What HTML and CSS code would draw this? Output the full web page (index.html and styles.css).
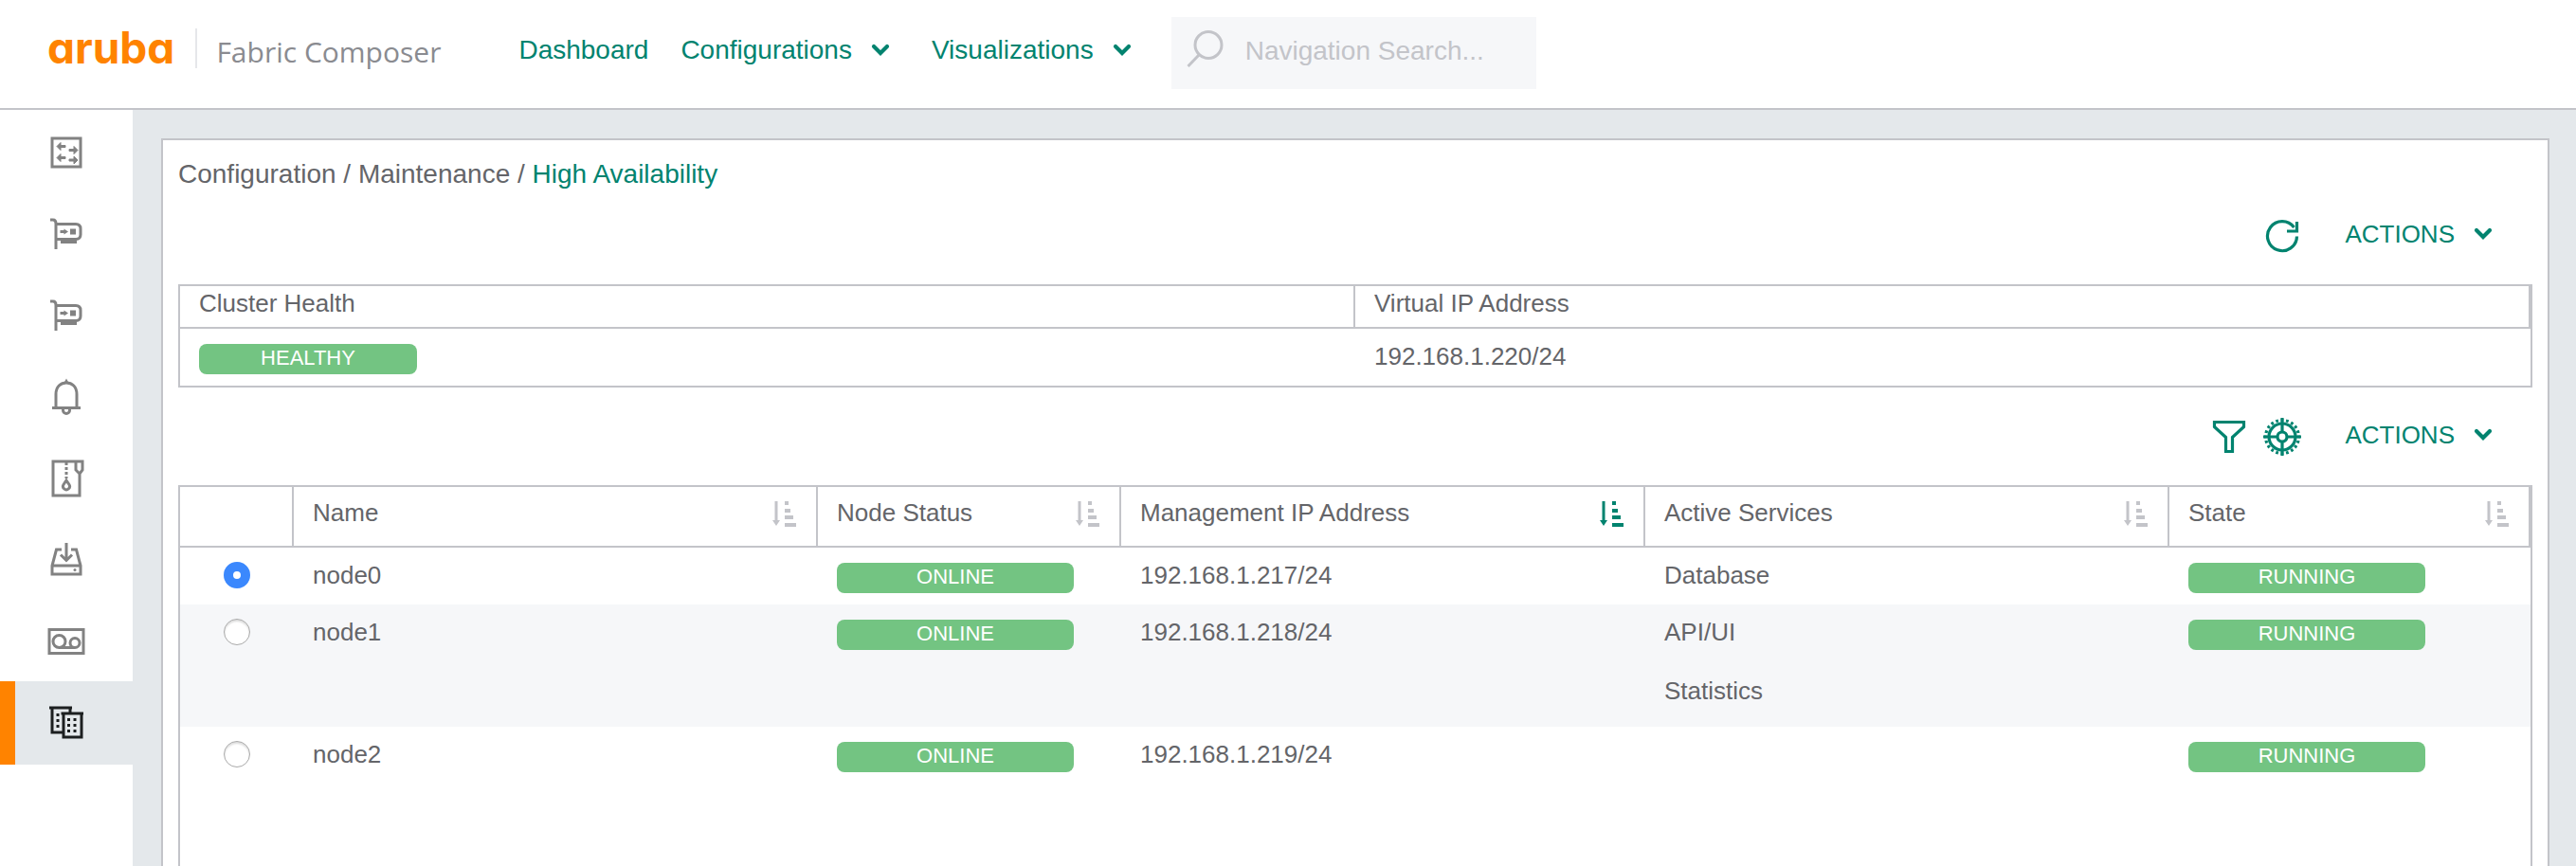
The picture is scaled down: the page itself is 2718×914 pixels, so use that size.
FILE: index.html
```html
<!DOCTYPE html>
<html lang="en">
<head>
<meta charset="utf-8">
<title>Aruba Fabric Composer - High Availability</title>
<link rel="stylesheet" href="styles.css">
</head>
<body>
<svg class="defs" aria-hidden="true">
  <symbol id="chevron" viewBox="0 0 20 14"><path d="M3 3l7 7 7-7" fill="none" stroke="currentColor" stroke-width="4.200" stroke-linecap="round"/></symbol>
  <symbol id="sort" viewBox="0 0 26 28"><path d="M2.500 1h3v20h2.500l-4 6L0 21h2.500z M13 1h4v4h-4z M13 9h6v4h-6z M13 16h9v4H13z M13 24h12v4H13z" fill="currentColor"/></symbol>
  <symbol id="nic" viewBox="0 0 36 36"><g fill="none" stroke="currentColor" stroke-width="3"><path d="M1 3h3q3 0 3 4v27"/><path d="M7 7.500h21q5 0 5 5v6q0 5-5 5H7"/></g><path d="M12 24h17v4H12z M11.500 14h4v-1.500l4.500 3-4.500 3V17h-4z M22 12.500h6v6h-6z" fill="currentColor"/></symbol>
</svg>
<header class="topbar">
  <a class="brand" href="#"><span class="brand-mark">aruba</span><span class="brand-name">Fabric Composer</span></a>
  <nav class="menu">
    <a class="menu-link" href="#">Dashboard</a>
    <button class="menu-link" type="button">Configurations<svg class="chevron"><use href="#chevron"/></svg></button>
    <button class="menu-link" type="button">Visualizations<svg class="chevron"><use href="#chevron"/></svg></button>
  </nav>
  <label class="search">
    <svg class="search-icon" viewBox="0 0 40 40"><g fill="none" stroke="currentColor" stroke-width="3"><circle cx="23" cy="15.500" r="14"/><path d="M13 26L1.500 38"/></g></svg>
    <input class="search-input" type="text" placeholder="Navigation Search..." aria-label="Navigation Search">
  </label>
</header>
<div class="body">
  <nav class="sidebar">
    <a class="side-item" href="#" aria-label="Switches"><svg class="side-icon" viewBox="0 0 40 40"><path d="M5 5h30v30H5z" fill="none" stroke="currentColor" stroke-width="3"/><path d="M10 13.500l4-4v3h5v2h-5v3z M10 25.500l4-4v3h5v2h-5v3z M32 17.500l-4-4v3h-5v2h5v3z M32 28l-4-4v3h-5v2h5v3z" fill="currentColor" stroke="currentColor"/></svg></a>
    <a class="side-item" href="#" aria-label="Adapters"><svg class="side-icon" viewBox="-2 -2 40 40"><use href="#nic" width="36" height="36"/></svg></a>
    <a class="side-item" href="#" aria-label="Ports"><svg class="side-icon" viewBox="-2 -2 40 40"><use href="#nic" width="36" height="36"/></svg></a>
    <a class="side-item" href="#" aria-label="Alarms"><svg class="side-icon" viewBox="0 0 40 40"><g fill="none" stroke="currentColor" stroke-width="3"><path d="M5 31.500h30"/><path d="M9 32V17c0-8 5-12 11-12s11 4 11 12v15"/><path d="M16.500 33v1a3.500 3.500 0 0 0 7 0v-1"/></g><path d="M17.500 5L20 .500 22.500 5z" fill="currentColor"/></svg></a>
    <a class="side-item" href="#" aria-label="Archive"><svg class="side-icon" viewBox="0 0 40 40"><g fill="none" stroke="currentColor" stroke-width="3"><path d="M34 14v24H6V2h31v9l-3 4-4-4V2"/><path d="M20 3v17" stroke-dasharray="3 2"/><path d="M20 22l3 4.500a3.500 3.500 0 1 1-6 0z"/></g></svg></a>
    <a class="side-item" href="#" aria-label="Backup"><svg class="side-icon" viewBox="0 0 40 40"><g fill="none" stroke="currentColor" stroke-width="3"><path d="M15 9H9.500L5 26v9h30v-9L30.500 9H25M5 26h30"/><path d="M20 2v18M14 14.500l6 6 6-6"/></g><circle cx="29" cy="30.500" r="1.500" fill="currentColor"/></svg></a>
    <a class="side-item" href="#" aria-label="Recordings"><svg class="side-icon" viewBox="0 0 40 40"><g fill="none" stroke="currentColor" stroke-width="3"><path d="M2 7.500h36v25H2z"/><circle cx="12.500" cy="20" r="6.500"/><circle cx="29" cy="21.500" r="5"/><path d="M12 26.500h17"/></g></svg></a>
    <a class="side-item side-item-active" href="#" aria-label="Maintenance" aria-current="page"><svg class="side-icon" viewBox="0 0 40 40"><g fill="none" stroke="currentColor" stroke-width="3"><path d="M2 4h24M5 5v25h11M24 5v5"/><path d="M14.500 10H38M17 11v24h19V11"/></g><path d="M9.500 10h3v3h-3z M9.500 16h3v3h-3z M9.500 22h3v3h-3z M21 15h3v3h-3z M27.500 15h3v3h-3z M21 21h3v3h-3z M27.500 21h3v3h-3z M21 27h3v3h-3z M27.500 27h3v3h-3z" fill="currentColor"/></svg></a>
  </nav>
  <main class="content">
    <section class="panel">
      <div class="crumbs">Configuration / Maintenance / <a class="crumb-current" href="#">High Availability</a></div>
      <div class="toolbar">
        <button class="icon-button" type="button" aria-label="Refresh"><svg class="tool-icon" viewBox="0 0 40 40"><g fill="none" stroke="currentColor" stroke-width="3.200"><path d="M35.500 20.500A15.500 15.500 0 1 1 32.500 11"/><path d="M35.500 5v10H25"/></g></svg></button>
        <button class="actions" type="button">ACTIONS<svg class="chevron"><use href="#chevron"/></svg></button>
      </div>
      <div class="frame frame-summary">
        <table class="grid grid-compact">
          <colgroup><col class="col-half"><col class="col-half"></colgroup>
          <thead><tr><th>Cluster Health</th><th>Virtual IP Address</th></tr></thead>
          <tbody><tr><td><span class="badge badge-narrow">HEALTHY</span></td><td>192.168.1.220/24</td></tr></tbody>
        </table>
      </div>
      <div class="toolbar">
        <button class="icon-button" type="button" aria-label="Filter"><svg class="tool-icon" viewBox="0 0 40 40"><path d="M4.500 4.500h31v5L23.500 20.500v15h-7v-15L4.500 9.500z" fill="none" stroke="currentColor" stroke-width="3.200"/></svg></button>
        <button class="icon-button" type="button" aria-label="Settings"><svg class="tool-icon" viewBox="0 0 40 40"><g fill="none" stroke="currentColor" stroke-width="3.200"><circle cx="20" cy="20" r="14"/><circle cx="20" cy="20" r="5"/><path d="M20 0v15M20 25v15M0 20h15M25 20h15"/><circle cx="20" cy="20" r="17.500" pathLength="200" stroke-dasharray="5 5" stroke-dashoffset="2.500"/></g></svg></button>
        <button class="actions" type="button">ACTIONS<svg class="chevron"><use href="#chevron"/></svg></button>
      </div>
      <div class="frame frame-fill">
        <table class="grid">
          <colgroup><col class="col-select"><col class="col-name"><col class="col-status"><col class="col-ip"><col class="col-services"><col class="col-state"></colgroup>
          <thead>
            <tr>
              <th></th>
              <th><div class="head">Name<button class="sort" type="button" aria-label="Sort by name"><svg class="sort-icon"><use href="#sort"/></svg></button></div></th>
              <th><div class="head">Node Status<button class="sort" type="button" aria-label="Sort by status"><svg class="sort-icon"><use href="#sort"/></svg></button></div></th>
              <th><div class="head">Management IP Address<button class="sort sort-active" type="button" aria-label="Sort by address"><svg class="sort-icon"><use href="#sort"/></svg></button></div></th>
              <th><div class="head">Active Services<button class="sort" type="button" aria-label="Sort by services"><svg class="sort-icon"><use href="#sort"/></svg></button></div></th>
              <th><div class="head">State<button class="sort" type="button" aria-label="Sort by state"><svg class="sort-icon"><use href="#sort"/></svg></button></div></th>
            </tr>
          </thead>
          <tbody>
            <tr>
              <td class="cell-select"><input class="radio" type="radio" name="node" id="n0" checked></td>
              <td><label for="n0">node0</label></td>
              <td><span class="badge">ONLINE</span></td>
              <td>192.168.1.217/24</td>
              <td>Database</td>
              <td><span class="badge">RUNNING</span></td>
            </tr>
            <tr>
              <td class="cell-select"><input class="radio" type="radio" name="node" id="n1"></td>
              <td><label for="n1">node1</label></td>
              <td><span class="badge">ONLINE</span></td>
              <td>192.168.1.218/24</td>
              <td><ul class="services"><li>API/UI</li><li>Statistics</li></ul></td>
              <td><span class="badge">RUNNING</span></td>
            </tr>
            <tr>
              <td class="cell-select"><input class="radio" type="radio" name="node" id="n2"></td>
              <td><label for="n2">node2</label></td>
              <td><span class="badge">ONLINE</span></td>
              <td>192.168.1.219/24</td>
              <td></td>
              <td><span class="badge">RUNNING</span></td>
            </tr>
          </tbody>
        </table>
      </div>
    </section>
  </main>
</div>
</body>
</html>
```
FILE: styles.css
```css
:root {
  --green: #01836f;
  --line: #c3c4c9;
  --text: #646569;
  --wash: #e4e8eb;
  --pale: #f6f7f9;
}
* { box-sizing: border-box; }
body {
  margin: 0;
  min-height: 100vh;
  display: flex;
  flex-direction: column;
  background: #fff;
  color: var(--text);
  font: 26px/30px "Liberation Sans", Arial, sans-serif;
}
button {
  padding: 0;
  border: 0;
  background: none;
  color: inherit;
  font: inherit;
  cursor: pointer;
}
a { color: inherit; text-decoration: none; }
svg { display: block; flex: none; }
.defs { position: absolute; width: 0; height: 0; }

.topbar {
  display: flex;
  align-items: flex-start;
  height: 116px;
  padding-left: 50px;
  border-bottom: 2px solid var(--line);
}
.brand { display: flex; margin-top: 30px; }
.brand-mark {
  height: 42px;
  padding-right: 22px;
  border-right: 2px solid #e6e7ea;
  color: #ff8300;
  font: 700 46px/40px Inter, sans-serif;
  font-feature-settings: "cv11";
}
.brand-name {
  padding-left: 20px;
  color: #8a8b90;
  font: 30px/50px "Open Sans", sans-serif;
}
.menu {
  display: flex;
  gap: 34px;
  margin: 37px 0 0 82px;
  color: var(--green);
  font-size: 28px;
  line-height: 32px;
}
.menu-link { display: flex; align-items: center; gap: 20px; }
.menu-link + .menu-link + .menu-link { margin-left: 10px; }
.chevron { width: 20px; height: 14px; }
.search {
  display: flex;
  width: 385px;
  height: 76px;
  margin: 18px 0 0 42px;
  padding: 14px 16px;
  background: var(--pale);
  color: var(--line);
}
.search-icon { width: 40px; height: 40px; }
.search-input {
  flex: 1;
  min-width: 0;
  height: 44px;
  margin-left: 22px;
  padding: 0;
  border: 0;
  background: none;
  font: 28px/32px "Liberation Sans", Arial, sans-serif;
}
.search-input::placeholder { color: var(--line); }

.body { display: flex; flex: 1; }
.sidebar { width: 140px; padding-top: 2px; color: #828282; }
.side-item {
  display: flex;
  align-items: center;
  justify-content: center;
  height: 86px;
}
.side-item-active {
  height: 88px;
  margin: -1px 0;
  padding-right: 16px;
  border-left: 16px solid #ff8300;
  background: var(--wash);
  color: #1c1f20;
}
.side-icon { width: 40px; height: 40px; }

.content {
  flex: 1;
  display: flex;
  min-width: 0;
  padding: 30px 28px 0 30px;
  background: var(--wash);
}
.panel {
  flex: 1;
  display: flex;
  flex-direction: column;
  min-width: 0;
  padding: 20px 16px 0;
  border: 2px solid var(--line);
  border-bottom: 0;
  background: #fff;
}
.crumbs { font-size: 28px; line-height: 32px; }
.crumb-current { color: var(--green); }
.toolbar {
  display: flex;
  align-items: center;
  justify-content: flex-end;
  gap: 16px;
  padding: 29px 42px 31px 0;
  color: var(--green);
}
.tool-icon { width: 40px; height: 40px; }
.actions {
  display: flex;
  align-items: center;
  gap: 20px;
  margin-left: 30px;
  padding-bottom: 4px;
}

.frame { border: 2px solid var(--line); }
.frame-summary { margin-bottom: 3px; }
.frame-fill { flex: 1; border-bottom: 0; }
.grid { width: 100%; table-layout: fixed; border-spacing: 0; }
.col-half { width: 50%; }
.col-select { width: 120px; }
.col-name, .col-ip, .col-services { width: 553px; }
.col-status { width: 320px; }
.col-state { width: 381px; }
.grid th {
  padding: 12px 20px 20px;
  border-right: 2px solid var(--line);
  border-bottom: 2px solid var(--line);
  font-weight: 400;
  text-align: left;
}
.grid-compact th { padding: 3px 20px 10px; }
.grid td { padding: 14px 20px 16px; vertical-align: top; }
.grid tbody tr:nth-child(even) { background: var(--pale); }
.grid .cell-select { padding: 15px 0 0; text-align: center; }
.head { display: flex; justify-content: space-between; }
.sort { padding-top: 2px; color: var(--line); }
.sort-active { color: var(--green); }
.sort-icon { width: 26px; height: 28px; }
.badge {
  display: block;
  width: 250px;
  height: 32px;
  margin: 2px 0 -4px;
  border-radius: 8px;
  background: #73c482;
  color: #fff;
  font-size: 22px;
  line-height: 29px;
  text-align: center;
}
.badge-narrow { width: 230px; }
.services { margin: 0 0 7px; padding: 0; list-style: none; }
.services li + li { margin-top: 32px; }
.radio {
  appearance: none;
  display: block;
  width: 28px;
  height: 28px;
  margin: 0 auto;
  border: 1px solid #a9a9a9;
  border-radius: 50%;
  background: #fff;
  box-shadow: inset 0 2px 2px #ddd;
}
.radio:checked {
  border: 10px solid #3b88fd;
  box-shadow: none;
}
```
